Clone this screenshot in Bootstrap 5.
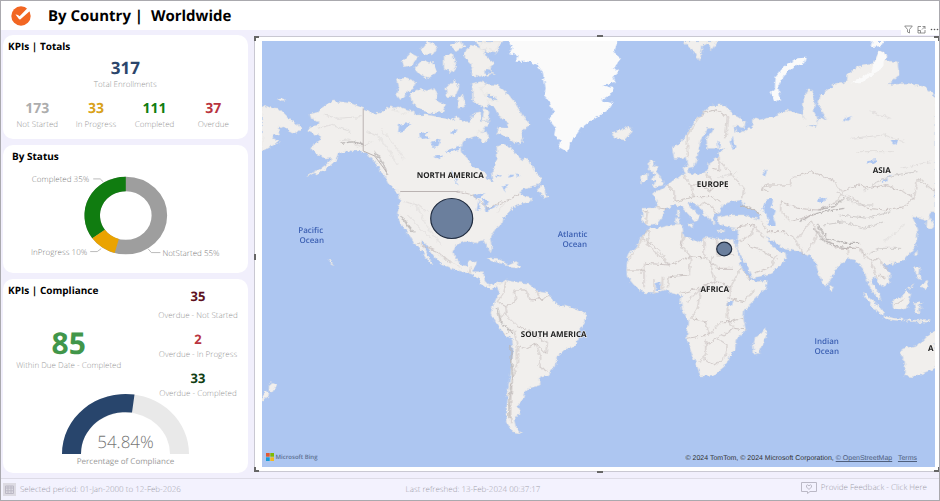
<!DOCTYPE html>
<html lang="en">
<head>
<meta charset="utf-8">
<meta name="viewport" content="width=device-width, initial-scale=1">
<title>By Country | Worldwide</title>
<link href="https://cdn.jsdelivr.net/npm/bootstrap@5.3.0/dist/css/bootstrap.min.css" rel="stylesheet">
<style>
body{font-family:"Open Sans","Noto Sans",sans-serif;font-size:8px;line-height:12px;background:#f1effc;color:#000;border:1px solid #aaa9ae;text-rendering:geometricPrecision}
.topbar{height:29px;padding-left:10px;gap:17px}
.topbar h1{font-size:15px;line-height:24px;font-weight:700;white-space:pre}
.workspace{display:grid;grid-template-columns:minmax(240px,263fr) 737fr;gap:6px;padding:5px 0 5px 2px;min-height:0}
.side{display:grid;grid-template-rows:104fr 128fr 194fr;gap:6px;min-height:0}
.panel{background:#fff;border-radius:10px;padding:4px 5px;min-height:0}
.panel h2{font-size:10px;line-height:14px;font-weight:700}
.num{font-weight:700;line-height:20px;font-size:14px}
.num-lg{font-size:17px;line-height:22px}
.num-xl{font-size:30px;line-height:34px}
.cap{font-size:8px;font-weight:300;color:#999;white-space:nowrap}
.navy{color:#2b456b}.grey{color:#adadad}.amber{color:#d9a21b}.green{color:#107c10}.red{color:#b93440}
.maroon{color:#5c1020}.forest{color:#0f3d12}.leaf{color:#41964a}
.compliance{display:grid;grid-template-columns:120fr 88fr;gap:24px}
.compliance h2{white-space:nowrap}
.due{padding-top:25px}
.overdue{padding-top:4px}
.overdue .num{line-height:18px;font-size:13px}
.overdue .cap{line-height:14px;margin-bottom:7px}
.gauge{width:130px;margin-top:-8px}
.viz{background:#fff;border:1px solid #c9c8d2;border-right:0;padding:4px 4px 4px 7px;min-width:0;min-height:0;margin:1px 0}
.viz>svg{width:100%;height:100%}
.handle{position:absolute;background:#666}
.h-n{top:-2px;left:50%;width:6px;height:2px}.h-s{bottom:-2px;left:50%;width:6px;height:2px}.h-w{left:-1px;top:50%;width:2px;height:6px}
.corner{position:absolute;width:5px;height:5px;border:0 solid #666}
.c-nw{left:-1px;top:-1px;border-width:2px 0 0 2px}.c-sw{left:-1px;bottom:-1px;border-width:0 0 2px 2px}
.c-ne{right:0;top:-1px;border-width:2px 1px 0 0}.c-se{right:0;bottom:-1px;border-width:0 1px 2px 0}
.tools{position:absolute;right:0;top:-13px;background:#fff;gap:4px;padding:0 0 1px 3px}
.tools button{width:9px;height:10px;line-height:0}
.attrib{position:absolute;right:22px;bottom:7px;font:7px/10px "Liberation Sans",sans-serif;color:#333}
.attrib a{color:#4f5f7d}
.bing{position:absolute;left:11px;bottom:9px;font-size:6px;line-height:10px;font-weight:600;color:#5c6f90;gap:2px}
.foot{height:22px;border-top:1px solid #dddbe6;background:#f3f2fe;font-size:8px;font-weight:300;color:#9f9eaa;padding:0 12px 0 2px}
.foot a{color:#9f9eaa}
.cont{font:700 8px "Open Sans",sans-serif;fill:#222;text-anchor:middle;paint-order:stroke;stroke:#f4f3f2;stroke-width:1px}
.sea{font:600 8px "Open Sans",sans-serif;fill:#3d61b3;text-anchor:middle}
</style>
<script src="https://cdn.jsdelivr.net/npm/bootstrap@5.3.0/dist/js/bootstrap.bundle.min.js"></script>
</head>
<body class="vh-100 d-flex flex-column overflow-hidden">
<header class="topbar bg-white d-flex align-items-center flex-shrink-0">
 <svg width="20" height="20" viewBox="0 0 20 20" aria-hidden="true"><circle cx="10" cy="10" r="9.7" fill="#f26622"/><path d="M4.500 8.500Q7 8.300 8.600 10.300L18 .5 20 4 9.500 13.200Q8.600 13.800 7.900 13Z" fill="#fff"/></svg>
 <h1 class="m-0">By Country |  Worldwide</h1>
</header>
<main class="workspace flex-grow-1">
 <div class="side">
  <section class="panel text-center">
   <h2 class="m-0 text-start">KPIs | Totals</h2>
   <div class="num num-lg navy mt-1">317</div>
   <div class="cap mb-1 pb-1">Total Enrollments</div>
   <div class="row g-0">
    <div class="col"><div class="num grey">173</div><div class="cap">Not Started</div></div>
    <div class="col"><div class="num amber">33</div><div class="cap">In Progress</div></div>
    <div class="col"><div class="num green">111</div><div class="cap">Completed</div></div>
    <div class="col"><div class="num red">37</div><div class="cap">Overdue</div></div>
   </div>
  </section>
  <section class="panel d-flex flex-column">
   <h2 class="m-0 ps-1">By Status</h2>
   <svg class="w-100 flex-grow-1" viewBox="8 165 234 104" role="img" aria-label="Enrollments by status">
    <g fill="none" stroke-width="15.5">
     <g transform="translate(125.5 216.5) scale(1 .94)">
      <circle r="33.5" stroke="#9e9e9e"/>
      <path d="M0-33.5A33.5 33.5 0 0 0-27.1 19.7" stroke="#107c10"/>
      <path d="M-27.1 19.7A33.5 33.5 0 0 0-9 32.3" stroke="#eaa300"/>
     </g>
     <g stroke="#aaa" stroke-width=".8"><path d="M93 180h7l3 3"/><path d="M90 252.500h7l4-3"/><path d="M148 250l3 3.500h9"/></g>
    </g>
    <g font-size="8" font-weight="300" fill="#808080"><text x="89" y="183" text-anchor="end">Completed 35%</text><text x="87" y="256" text-anchor="end">InProgress 10%</text><text x="162" y="257">NotStarted 55%</text></g>
   </svg>
  </section>
  <section class="panel">
   <div class="compliance text-center">
    <div><h2 class="m-0 text-start">KPIs | Compliance</h2>
     <div class="due"><div class="num num-xl leaf pt-1">85</div><div class="cap">Within Due Date - Completed</div></div>
    </div>
    <div class="overdue">
     <div class="num maroon pb-1">35</div><div class="cap">Overdue - Not Started</div>
     <div class="num red">2</div><div class="cap">Overdue - In Progress</div>
     <div class="num forest">33</div><div class="cap m-0">Overdue - Completed</div>
    </div>
   </div>
   <svg class="gauge d-block mx-auto" viewBox="60 393 130 74" role="img" aria-label="Percentage of compliance 54.84%">
    <path d="M62 454A63.500 60 0 0 1 189 454H170A44.500 41.500 0 0 0 81 454Z" fill="#e9e9e9"/>
    <path d="M62 454A63.500 60 0 0 1 134.500 394.600L132 412.600A44.500 41.500 0 0 0 81 454Z" fill="#28456c"/>
    <text x="125.500" y="448" font-size="17" font-weight="300" fill="#777" text-anchor="middle">54.84%</text>
    <text x="125.500" y="464" font-size="8" fill="#999" text-anchor="middle">Percentage of Compliance</text>
   </svg>
  </section>
 </div>
 <section class="viz position-relative">
  <svg class="d-block" viewBox="261 41 674 426" preserveAspectRatio="xMidYMid slice" role="img" aria-label="World map with enrollments by country">
   <defs>
    <filter id="coast" x="0" y="0" width="1" height="1" color-interpolation-filters="sRGB"><feTurbulence type="fractalNoise" baseFrequency=".22" numOctaves="3" seed="4" result="n"/><feDisplacementMap in="SourceGraphic" in2="n" scale="5" xChannelSelector="R" yChannelSelector="G"/></filter>
   </defs>
   <path fill="#adc6f1" d="M200 0h800v520H200z"/>
   <g filter="url(#coast)"><g transform="translate(250 25) scale(.33333)">
    <g fill="#f1efed" stroke="#e3e0df" stroke-width="1.500">
     <!-- North America -->
     <path d="M337 250 300 235 250 228 225 240 210 250 200 262 178 268 182 278 205 290 205 300 178 305 170 318 190 328 205 325 210 335 205 350 190 355 183 372 195 388 215 390 225 402 245 400 225 420 200 437 165 455 200 445 235 425 255 405 262 385 285 375 310 378 330 378 350 385 365 400 380 420 390 440 405 455 415 475 430 490 445 505 448 525 445 545 440 565 445 585 455 605 475 628 490 655 505 665 520 690 535 712 548 720 530 690 515 655 508 645 520 650 540 680 555 700 570 715 600 728 640 742 660 747 680 760 690 775 705 785 720 791 735 788 750 780 750 772 735 775 715 782 702 768 698 740 670 740 664 735 675 720 678 707 655 710 648 723 630 720 612 695 608 680 615 660 640 650 665 650 680 655 685 648 700 646 710 665 718 684 723 670 718 640 735 610 750 600 755 580 775 560 795 540 815 535 840 530 845 520 820 515 805 500 820 490 860 480 875 465 855 440 830 400 815 405 790 385 785 370 760 358 738 365 740 400 730 425 725 445 728 470 712 465 700 440 665 425 650 400 634 385 632 365 640 345 665 335 690 330 700 310 715 290 690 290 690 260 670 265 660 290 640 290 620 275 600 285 560 275 530 270 500 270 480 255 455 250 440 255 420 245 400 255 385 265 365 265 350 255Z"/>
     <!-- Arctic archipelago -->
     <path d="M440 165 465 158 495 172 488 190 468 205 450 225 438 210 445 190ZM478 210 505 192 530 198 550 190 560 205 555 225 585 240 575 260 545 265 520 258 500 245 485 235ZM455 110 480 85 500 95 485 120 460 125ZM490 130 515 105 545 115 560 140 535 158 505 148ZM510 75 530 50 560 65 550 85 525 90ZM580 95 605 85 615 125 600 145 580 130ZM640 95 665 120 660 150 685 155 720 145 730 150 715 125 730 115 705 95 700 75 670 60 650 70ZM585 190 610 165 625 185 615 215 590 215ZM620 225 635 205 645 245 622 250ZM665 175 690 170 715 180 710 215 730 225 705 245 685 240 665 225ZM600 60l30-15 10 20-25 15ZM670 48 760 48 745 65 740 85 710 80ZM700 140l20-15 5 20-15 10Z"/>
     <path d="M690 190 705 178 740 180 770 205 790 230 815 270 838 300 820 310 810 325 815 345 805 358 780 345 765 335 740 325 745 308 770 310 770 290 745 275 735 250 715 240 710 225 740 225 725 210 700 210ZM682 318l25 5 8 22-18 5-17-12ZM700 250l15 10-2 25-18 5ZM690 50h60l-20 30-15-10-25 5ZM862 500 870 480 880 487 885 510 895 515 880 518ZM437 490l12 13-3 6-14-12ZM425 255l25-10 25 15-10 8Z"/>
     <!-- Siberian tip, small ocean islands -->
     <path d="M33 240 60 248 85 250 110 275 125 290 145 300 152 312 135 326 115 320 100 305 82 310 85 325 62 335 85 350 60 365 33 380ZM80 222l12-4 12 6-10 6ZM33 1125 40 1105 50 1100 55 1110 40 1125ZM55 1080 65 1072 78 1080 65 1105 55 1095ZM232 705l8 2 8 12-10-6Z"/>
     <!-- Caribbean -->
     <path d="M708 698 735 700 765 712 772 720 750 715 725 708ZM775 720l20-8 18 12-15 5-20-2Z"/>
     <!-- South America -->
     <path transform="translate(690 675)" d="M45 105 60 100 75 90 95 95 120 98 140 100 155 110 175 125 200 130 215 150 230 165 260 170 290 178 315 190 318 205 300 235 295 260 280 290 250 300 228 320 225 345 200 375 178 380 178 405 145 415 130 430 125 450 110 465 118 485 100 510 105 530 122 550 95 545 80 520 75 480 80 430 90 370 98 300 95 270 70 250 50 225 30 190 35 170 45 150 55 125Z"/>
     <!-- Africa and Madagascar -->
     <path d="M1195 612 1230 608 1270 598 1295 598 1297 620 1300 635 1320 640 1345 655 1360 638 1380 638 1400 642 1430 645 1450 643 1455 665 1470 705 1465 715 1480 740 1500 765 1520 770 1550 767 1545 790 1510 825 1480 855 1478 880 1485 915 1455 945 1453 975 1435 995 1420 1025 1390 1050 1350 1053 1340 1025 1325 990 1308 940 1315 890 1295 855 1290 825 1295 812 1265 805 1250 793 1210 805 1180 803 1150 780 1130 755 1128 735 1130 705 1140 680 1155 665 1170 640ZM1545 910 1548 925 1535 960 1525 985 1510 988 1508 960 1515 935 1530 928Z"/>
     <!-- Europe and Asia -->
     <path d="M1175 550 1220 548 1220 525 1205 510 1215 500 1235 490 1250 480 1270 465 1290 450 1305 450 1297 430 1312 422 1315 445 1340 450 1370 440 1375 415 1400 400 1405 382 1425 372 1395 370 1370 370 1368 340 1385 320 1390 310 1370 310 1350 345 1345 370 1340 395 1330 425 1312 428 1305 395 1290 400 1270 400 1265 370 1290 350 1310 325 1330 290 1360 260 1385 240 1420 240 1440 260 1485 290 1480 308 1450 302 1455 320 1465 325 1490 315 1505 300 1505 280 1525 285 1570 275 1595 260 1610 255 1655 270 1665 285 1655 265 1655 235 1670 195 1685 195 1692 230 1690 260 1700 280 1695 300 1668 300 1692 306 1706 278 1728 284 1702 240 1710 210 1750 180 1790 170 1790 150 1820 125 1870 115 1885 80 1905 88 1905 108 1940 110 1945 150 1910 180 1970 175 2020 185 2055 215V560L2040 560 2035 575 2048 600 2043 610 2028 605 2030 585 2015 580 1985 575 1995 600 2000 625 1995 665 1960 705 1910 720 1895 720 1920 745 1915 775 1895 785 1870 755 1860 770 1885 805 1890 825 1868 805 1853 775 1840 735 1815 705 1790 700 1760 725 1740 760 1725 785 1710 765 1695 715 1675 690 1650 680 1600 672 1575 655 1545 632 1565 665 1590 682 1603 682 1608 700 1565 745 1505 760 1485 715 1458 668 1462 640 1462 610 1430 605 1405 598 1400 578 1440 570 1480 570 1530 585 1520 560 1485 545 1470 525 1440 530 1415 540 1402 565 1385 572 1395 600 1375 580 1360 568 1345 545 1325 530 1310 535 1320 550 1347 570 1335 590 1315 570 1295 545 1270 540 1245 550 1235 575 1220 595 1195 600 1175 590Z"/>
     <!-- Britain, Ireland, Iceland -->
     <path d="M1195 405 1212 408 1205 420 1220 425 1218 445 1235 465 1238 480 1205 487 1215 470 1205 460 1215 450 1195 430ZM1170 450 1190 445 1190 465 1170 475ZM1090 320 1110 315 1135 303 1145 320 1120 345 1095 340 1085 330Z"/>
     <path d="M1300 48h100l-20 30-5-25-20 10-8 45-12-25-15-10ZM1280 555h6v18h-6ZM1278 578h9l-2 20-8-3ZM1310 597h18l-3 12ZM1400 615l22 2-2 4-20-2ZM1445 612l15-3-5 8Z"/>
     <!-- Sri Lanka, Indonesia, Philippines -->
     <path d="M1735 780l10 5 4 10-8 5-6-8ZM1835 802 1855 815 1885 845 1900 865 1895 873 1875 855 1850 825ZM1900 873 1930 880 1955 882 1960 888 1925 885 1900 880ZM1965 884l70 3v5l-65-3ZM1925 825 1950 820 1965 798 1980 805 1975 825 1970 850 1945 855 1928 850ZM1990 835l30-3-20 8 15 10-12-2 2 18-8 0-5-20ZM1992 725l14 0-3 25 12 12-15-5-8-15ZM2010 780l20-15 5 20-15 10ZM1990 780l-18 15 3-8ZM1920 708l10 3-5 9ZM1990 690l10-15v18Z"/>
     <!-- Australia -->
     <path d="M2055 920 2035 928 2020 945 2000 960 1955 972 1950 985 1962 1010 1965 1045 1960 1052 1985 1055 2015 1045 2055 1030Z"/>
    </g>
    <g fill="#fafafa">
     <path transform="translate(690 0)" d="M80 45 95 70 85 85 110 90 105 110 150 110 170 120 185 140 195 190 190 210 205 230 220 260 205 285 225 310 220 330 240 345 232 365 262 382 268 355 290 325 300 310 340 280 365 265 385 250 395 235 360 225 385 215 400 190 365 180 405 170 395 150 415 140 400 130 420 100 400 85 410 45Z"/>
     <path d="M1560 205 1572 190 1575 155 1600 125 1640 100 1665 98 1660 115 1630 125 1600 150 1582 180 1590 225 1575 230ZM1865 48h35l-10 16-30 2ZM1885 80l20 10-5 35-70 50-30 0 60-35Z"/>
    </g>
    <!-- Inland water -->
    <g fill="#adc6f1">
     <path d="M1545 525 1565 518 1570 530 1560 545 1575 560 1568 580 1575 600 1555 600 1548 575 1535 550ZM445 300l35-8-20 25-18 5ZM505 325l30-5-12 12 15 8-30 2ZM540 350l30-8-10 25-15 2ZM590 375l45-15-10 15-38 10ZM600 320l20-8-5 14-15 4ZM550 395l30-4-15 12ZM605 435l12 30 8 18-20-25ZM670 510 700 505 690 520 670 518ZM683 525 690 555 678 558ZM695 520 705 560 745 540 700 548 715 530ZM735 450l20-3-15 12ZM755 485l15-5-8 20ZM770 452l20 0-10 6ZM800 445l12 8-15 2ZM1430 830l18-4-4 16-18 3ZM1440 350l6-15 8 35-8 5ZM1400 345l8 15-6 10ZM1850 405l30-2-10 14-25-2ZM1890 475 1910 455 1925 445 1905 470ZM1785 280l20-8-25 20 5-22ZM1700 525l30-7-12 12-18 3ZM1920 345l20 0-8 15ZM1215 775l15-5v25l-15 0ZM1535 445l15-12-8 20Z"/>
    </g>
    <!-- Mountains and rivers -->
    <g fill="none" stroke="#cfcbca" stroke-width="3">
     <path stroke="#e0dddc" d="M220 270 260 280 330 275M200 310 240 300 300 320M260 350 290 345 330 365 360 350M350 320 380 330 410 370 440 420M390 310 420 350 460 400M460 530 500 540 530 560M470 570 500 600 540 640M490 530 520 590 570 660M560 690 590 705 630 728M740 560 765 530M1800 340 1900 330 1960 350M1820 380 1930 380M1860 260 1920 280M1950 430 2040 410M1960 600l-60 50M1400 460l60-20"/>
     <path stroke="#b9b5b4" stroke-width="4" d="M270 355 310 350 340 360M370 380 400 420 410 450M450 570 470 600 490 625M740 850 750 890 785 925M780 960 785 1050 775 1120 775 1180M1690 610 1720 650 1760 665 1810 670M1700 600 1730 640 1780 655 1830 655M1650 590 1680 570 1720 560 1780 550M1700 555 1750 545 1780 520M1470 540 1510 555 1530 570"/>
     <path d="M1720 600 1780 590 1840 610 1900 590M1770 570 1850 580 1920 560M1840 500 1880 470 1930 450 2000 440M1760 500l60 40 50 0M1840 690l50-20 60 0"/>
    </g>
    <!-- Borders -->
    <g fill="none" stroke="#c4bcba" stroke-width="2.500" stroke-linejoin="round">
     <path d="M500 655 560 680 600 715M655 745 660 725M620 498 665 510 710 550 770 525 805 510"/>
     <path transform="translate(690 675)" d="M75 95 70 125 50 155 75 170 105 150 100 120 135 120 150 150 190 145 205 135M165 120l15 30M75 170 80 200 110 230 145 240 170 260 200 280 195 310 165 280 135 295 110 290 100 240 70 250M110 290 110 340 95 390 90 450 90 520M165 280 180 320 175 350 200 365M75 185 55 215"/>
     <path d="M1190 615 1175 640 1135 705M1175 640 1225 675 1255 720 1185 715 1170 745M1195 615 1190 660 1255 720 1320 695 1370 700M1295 620 1290 660 1320 695 1315 750 1255 755 1250 785M1300 635 1290 670M1360 640V695L1400 730 1445 730M1398 642V690H1450M1385 690 1380 735 1395 770 1340 790 1290 805M1395 770 1440 785 1470 730 1500 765M1440 785 1435 820 1480 830 1510 795M1310 830 1350 790 1340 850 1320 880 1365 890 1375 930 1310 940M1375 930 1410 890 1440 890 1475 880M1430 830V880L1450 910 1485 915M1365 945 1365 990 1345 1010M1365 960 1400 940 1430 960 1425 995 1390 1020 1360 1000M1400 940 1450 910M1130 735H1180V790M1210 760V805M1235 755V795"/>
     <path d="M1180 560 1190 560 1185 595M1220 548 1250 553M1250 480 1270 500 1270 530M1300 452 1320 480 1350 480 1380 500 1400 480 1430 490M1270 530 1330 515 1385 515 1410 530M1320 480 1330 515M1345 545 1360 530 1385 545 1400 570M1365 445 1385 470 1380 500M1385 430 1405 435 1405 395M1310 395 1310 330 1355 265 1395 255 1430 275 1425 340M1400 400 1435 440 1480 490 1475 520M1550 500 1530 490 1550 480 1620 480 1620 460 1680 440 1710 450 1750 470 1775 500 1760 530 1700 555 1640 550 1590 530 1590 560M1775 500 1820 480 1860 490 1900 480 1960 500 1990 520 1960 545 1900 555 1850 550 1790 510M1990 520 2000 460 2040 490 2055 495M1590 560 1620 590 1690 570M1530 590 1550 620 1600 620 1630 640 1660 690M1460 605 1510 600 1540 640M1510 600 1500 630 1465 650M1490 660 1520 670 1570 700M1510 745 1560 725 1580 690M1640 640 1680 590 1720 640 1760 670 1830 670 1840 700M1670 680 1690 650 1700 620M1830 670 1860 710 1880 760M1860 710 1880 700 1910 735M1790 690V665M1885 750 1905 760M1930 840 1960 820"/>
    </g>
   </g></g>
   <path d="M362.500 108.500V151L374 156 386 172M399.500 191.500H457" fill="none" stroke="#bab3b2"/>
   <g stroke="#202c40" stroke-width="1.200" fill="#6b7f9d"><ellipse cx="451" cy="218.500" rx="21" ry="20"/><ellipse cx="723.500" cy="249" rx="7.500" ry="6.800"/></g>
   <g class="cont"><text x="449.500" y="178">NORTH AMERICA</text><text x="553" y="337">SOUTH AMERICA</text><text x="712" y="187">EUROPE</text><text x="881" y="173">ASIA</text><text x="714" y="292">AFRICA</text><text x="930" y="351">A</text></g>
   <g class="sea"><text x="310" y="233">Pacific</text><text x="311" y="243">Ocean</text><text x="572" y="237">Atlantic</text><text x="574" y="247">Ocean</text><text x="826" y="344">Indian</text><text x="826" y="354">Ocean</text></g>
  </svg>
  <div class="bing d-flex align-items-center"><svg width="8" height="8" viewBox="0 0 8 8" aria-hidden="true"><path fill="#e05a32" d="M0 0h3.700v3.700H0z"/><path fill="#7fba00" d="M4.300 0H8v3.700H4.300z"/><path fill="#169bd7" d="M0 4.300h3.700V8H0z"/><path fill="#f5b81c" d="M4.300 4.300H8V8H4.300z"/></svg>Microsoft Bing</div>
  <div class="attrib">© 2024 TomTom, © 2024 Microsoft Corporation, <a href="#">© OpenStreetMap</a> &nbsp; <a href="#">Terms</a></div>
  <div class="tools d-flex">
   <button class="btn p-0 border-0" aria-label="Filters"><svg width="9" height="9" viewBox="0 0 9 9" fill="none" stroke="#777" stroke-width=".8"><path d="M.7 1h7.600L5.500 4.500V8L3.500 7V4.500Z"/></svg></button>
   <button class="btn p-0 border-0" aria-label="Focus mode"><svg width="9" height="9" viewBox="0 0 9 9" fill="none" stroke="#777" stroke-width=".8"><path d="M4 1.500H1V8h7V5M5.500 1.500H8V4M8 1.500 5 4.500M1 5.500h2.500V8"/></svg></button>
   <button class="btn p-0 border-0" aria-label="More options"><svg width="9" height="9" viewBox="0 0 9 9" fill="#555"><circle cx="1.500" cy="4.500" r=".8"/><circle cx="4.500" cy="4.500" r=".8"/><circle cx="7.500" cy="4.500" r=".8"/></svg></button>
  </div>
  <i class="corner c-nw"></i><i class="corner c-sw"></i><i class="corner c-ne"></i><i class="corner c-se"></i>
  <i class="handle h-n"></i><i class="handle h-s"></i><i class="handle h-w"></i>
 </section>
</main>
<footer class="foot row g-0 align-items-center flex-shrink-0">
 <div class="col d-flex align-items-center gap-1"><svg width="13" height="13" viewBox="0 0 13 13" aria-hidden="true"><path fill="#dddbe3" d="M0 0h13v13H0z"/><path d="M2.500 3h8v7.500h-8zM2.500 5h8M5 3v7.500M8 3v7.500M2.500 7.800h8" stroke="#bcb9c6" fill="none"/></svg>Selected period: 01-Jan-2000 to 12-Feb-2026</div>
 <div class="col text-center ps-3">Last refreshed: 13-Feb-2024 00:37:17</div>
 <div class="col text-end"><a class="text-decoration-none d-inline-flex align-items-center gap-1" href="#"><svg width="16" height="12" viewBox="0 0 16 12" fill="none" stroke="#bbb9c6" aria-hidden="true"><path d="M.5.500h15v9H9L6.500 11.500V9.500h-6Z"/><path d="M8 7.500 5.500 5Q5 3 6.500 2.800L8 3.800 9.500 2.800Q11 3 10.500 5Z"/></svg>Provide Feedback - Click Here</a></div>
</footer>
</body>
</html>
